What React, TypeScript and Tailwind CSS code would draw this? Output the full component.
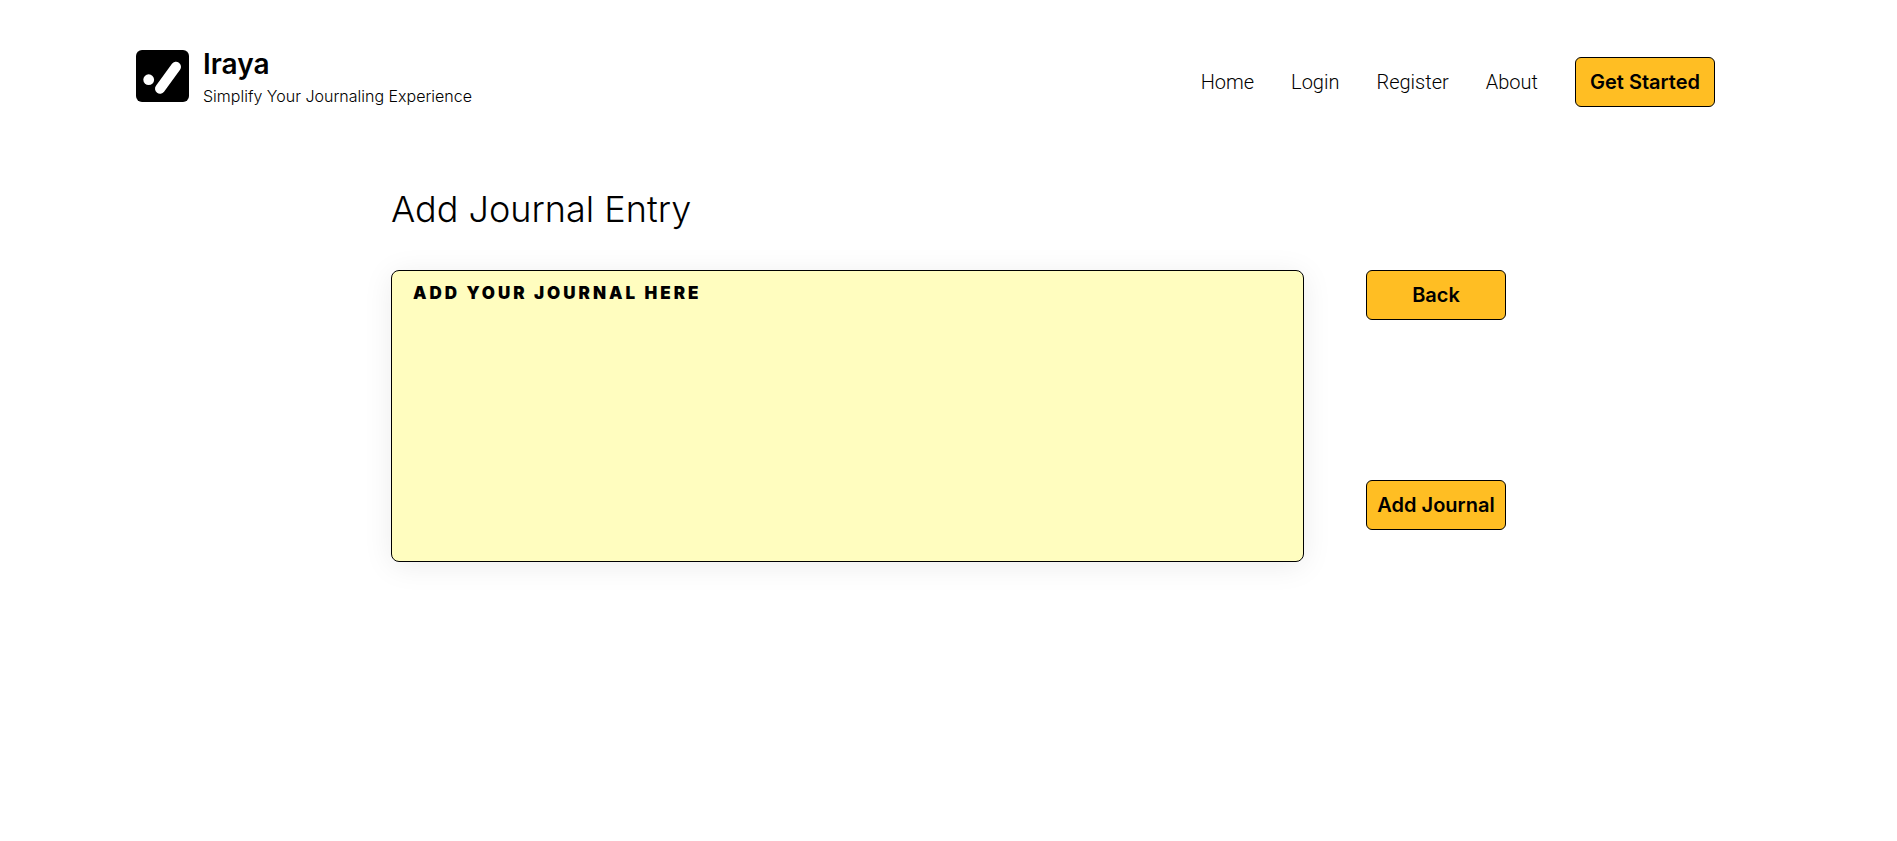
import type { ButtonHTMLAttributes } from "react";

const links = [
  { label: "Home", href: "#home" },
  { label: "Login", href: "#login" },
  { label: "Register", href: "#register" },
  { label: "About", href: "#about" },
];

function Logo() {
  return (
    <svg viewBox="0 0 53 52" className="h-[52px] w-[53px] shrink-0" aria-hidden="true">
      <rect width="53" height="52" rx="6" fill="#000" />
      <circle cx="12.7" cy="29.7" r="5.4" fill="#fff" />
      <path d="M24 38.7 40 16.7" stroke="#fff" strokeWidth="10" strokeLinecap="round" />
    </svg>
  );
}

function ActionButton(props: ButtonHTMLAttributes<HTMLButtonElement>) {
  return (
    <button
      type="button"
      className="h-[50px] w-[140px] shrink-0 cursor-pointer whitespace-nowrap rounded-md border border-black bg-[#ffbe23] text-[20px] font-semibold text-black"
      {...props}
    />
  );
}

export default function App() {
  return (
    <div className="min-h-screen bg-white font-['Inter',sans-serif] text-black">
      <header className="flex items-end justify-between pt-[50px] pr-[182px] pl-[136px]">
        <a href="#home" className="flex items-start gap-[14px]">
          <Logo />
          <span className="flex flex-col">
            <span className="text-[28px] leading-[28px] font-semibold">Iraya</span>
            <span className="mt-[7px] text-[16px] leading-[22px] font-light">
              Simplify Your Journaling Experience
            </span>
          </span>
        </a>
        <nav className="flex items-center gap-[37px]">
          {links.map((link) => (
            <a
              key={link.label}
              href={link.href}
              className="font-['Roboto',sans-serif] text-[20px] leading-6 font-light"
            >
              {link.label}
            </a>
          ))}
          <ActionButton>Get Started</ActionButton>
        </nav>
      </header>

      <main className="mx-auto mt-20 max-w-[1115px] pb-16">
        <h1 className="text-[36px] leading-[44px] font-light">Add Journal Entry</h1>
        <form className="mt-[39px] flex items-start gap-[62px]">
          <textarea
            aria-label="Journal entry"
            placeholder="ADD YOUR JOURNAL HERE"
            className="h-[292px] min-w-0 flex-1 resize-none rounded-lg border border-black bg-[#fffdbf] px-[21px] py-2.5 font-['Inter',sans-serif] text-[17px] leading-6 font-black tracking-[3px] shadow-[0_4px_30px_rgba(0,0,0,0.08)] outline-none placeholder:text-black"
          />
          <div className="flex flex-col gap-40">
            <ActionButton>Back</ActionButton>
            <ActionButton>Add Journal</ActionButton>
          </div>
        </form>
      </main>
    </div>
  );
}
